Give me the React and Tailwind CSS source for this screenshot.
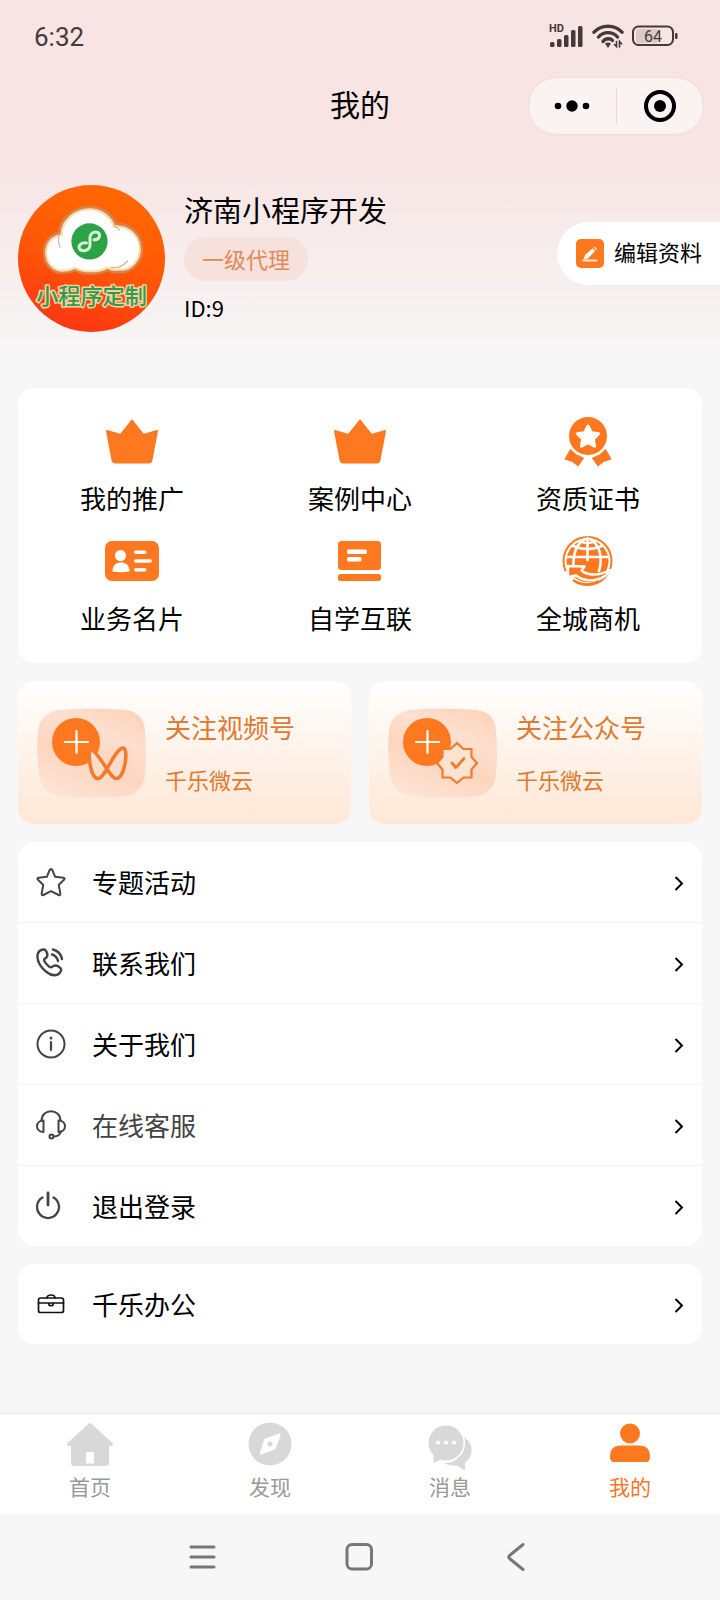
import { useState } from "react";

const ORANGE = "#fd781f";

function SignalIcon() {
  return (
    <svg width="36" height="32" viewBox="0 0 36 32" fill="#46393a" aria-hidden="true">
      <text x="1" y="12" fontSize="11" fontWeight="700" fontFamily="Roboto, sans-serif">
        HD
      </text>
      <rect x="2" y="22" width="4.500" height="5" rx="1.500" />
      <rect x="9" y="19" width="4.500" height="8" rx="1.500" />
      <rect x="16" y="15" width="4.500" height="12" rx="1.500" />
      <rect x="23" y="10" width="4.500" height="17" rx="1.500" />
      <rect x="30" y="6" width="4.500" height="21" rx="1.500" />
    </svg>
  );
}

function WifiIcon() {
  return (
    <svg width="32" height="26" viewBox="0 0 32 26" fill="none" stroke="#46393a" strokeWidth="3.400" strokeLinecap="round" aria-hidden="true">
      <path d="M2 9.200C9.500 1.200 22.500 1.200 30 9.200" />
      <path d="M6.500 14C11.500 8.200 20.500 8.200 25.500 14" />
      <path d="M11 18.500C13.500 15 18.500 15 20.500 17.500" />
      <path d="M13 20.500L16 25L19 20.500Q16 18.500 13 20.500Z" fill="#46393a" stroke="none" />
      <path d="M24.500 18.500V23.500L22.500 21.500M27.500 24V18.500L29.500 20.800" strokeWidth="1.600" />
    </svg>
  );
}

function BatteryIcon() {
  return (
    <svg width="46" height="22" viewBox="0 0 46 22" aria-hidden="true">
      <rect x="4" y="4" width="22" height="14" rx="3" fill="#d9c9c8" />
      <rect x="1" y="1.500" width="40" height="18.500" rx="5.500" fill="none" stroke="#46393a" strokeWidth="2" />
      <rect x="43" y="8" width="2.500" height="6" rx="1" fill="#46393a" />
      <text x="21" y="16.500" textAnchor="middle" fontSize="16" fontFamily="Roboto, sans-serif" fill="#46393a">
        64
      </text>
    </svg>
  );
}

function Avatar() {
  return (
    <svg width="147" height="147" viewBox="0 0 146 146" className="rounded-full" role="img" aria-label="小程序定制">
      <defs>
        <linearGradient id="avatar-bg" x1=".7" y1="0" x2=".4" y2="1">
          <stop offset="0" stopColor="#ff6a00" />
          <stop offset=".55" stopColor="#ff5607" />
          <stop offset="1" stopColor="#fd3614" />
        </linearGradient>
      </defs>
      <rect width="146" height="146" fill="url(#avatar-bg)" />
      <path
        d="M45 87C34 88 26 78 26 67C26 56 33 49 41 48C42 33 56 22 71 22C84 22 94 30 97 39C111 38 123 49 123 64C123 77 112 87 101 86C96 87 92 86 89 84C80 89 65 89 56 84C53 86 49 87 45 87Z"
        fill="#fff"
        stroke="#d9824a"
        strokeWidth="3"
      />
      <path
        d="M45 85C35 86 28 77 28 67C28 57 35 51 43 50C44 35 57 24 71 24C83 24 92 32 95 41C110 40 121 51 121 64C121 76 111 85 101 84C96 85 92 84 89 82C80 87 65 87 56 82C53 84 49 85 45 85Z"
        fill="#fff"
        stroke="#f9dcae"
        strokeWidth="2"
      />
      <path d="M41 50Q39 56 42 62M109 75Q103 83 92 82M95 41Q99 42 101 45" fill="none" stroke="#d9b48a" strokeWidth="1.200" />
      <circle cx="71" cy="56" r="18" fill="#2ba245" />
      <path
        d="M68 57.500C62 57 60 60.500 61 63C62.500 66.500 71 66 71.500 60V52C72 46 80 45 81 49.500C81.500 52.500 79 54.500 75.500 54.500"
        fill="none"
        stroke="#d8f3d9"
        strokeWidth="3"
        strokeLinecap="round"
      />
      <text
        x="73"
        y="118"
        textAnchor="middle"
        fontSize="22"
        fontWeight="500"
        fontFamily="'Noto Sans CJK SC', sans-serif"
        fill="#35994c"
        stroke="#f3d3a4"
        strokeWidth="3"
        strokeLinejoin="round"
        paintOrder="stroke"
      >
        小程序定制
      </text>
    </svg>
  );
}

function EditIcon() {
  return (
    <svg width="28" height="29" viewBox="0 0 28 29" aria-hidden="true">
      <rect width="28" height="29" rx="5" fill={ORANGE} />
      <path d="M7.500 21.500H20.500" stroke="#ffe9dc" strokeWidth="2" strokeLinecap="round" />
      <path d="M7.500 20.500L9 16L16.500 9.500L19 12L12 19.500Z" fill="#fff" />
      <path d="M17.300 8.800L18.800 7.500L21.300 10L19.800 11.400Z" fill="#ffd08a" />
    </svg>
  );
}

function CrownIcon() {
  return (
    <svg width="54" height="54" viewBox="0 0 54 54" aria-hidden="true">
      <path
        d="M27 6.500L38.500 21L52 17L46.500 46Q46 48.500 43.500 48.500H10.500Q8 48.500 7.500 46L2 17L15.500 21Z"
        fill={ORANGE}
        stroke={ORANGE}
        strokeWidth="2"
        strokeLinejoin="round"
      />
    </svg>
  );
}

function MedalIcon() {
  return (
    <svg width="54" height="54" viewBox="0 0 54 54" aria-hidden="true">
      <circle cx="27" cy="22" r="19" fill={ORANGE} />
      <path
        d="M27 12L30.300 18.700L37.700 19.700L32.300 24.900L33.600 32.200L27 28.700L20.400 32.200L21.700 24.900L16.300 19.700L23.700 18.700Z"
        fill="#fff"
        stroke="#fff"
        strokeWidth="3"
        strokeLinejoin="round"
      />
      <path d="M9.500 35.500Q15 42 22.500 44L17 52L11.500 47.500L4 45Z" fill={ORANGE} stroke={ORANGE} strokeLinejoin="round" />
      <path d="M44.500 35.500Q39 42 31.500 44L37 52L42.500 47.500L50 45Z" fill={ORANGE} stroke={ORANGE} strokeLinejoin="round" />
    </svg>
  );
}

function CardIcon() {
  return (
    <svg width="54" height="54" viewBox="0 0 54 54" aria-hidden="true">
      <rect x="0" y="7" width="54" height="40" rx="7" fill={ORANGE} />
      <g fill="#fff">
        <circle cx="15.500" cy="21.500" r="5.500" />
        <path d="M7.500 37.500C7.500 31 11 28.500 16 28.500S24.500 31 24.500 37.500Q16 39 7.500 37.500Z" />
        <rect x="29" y="16.500" width="12.500" height="3.500" rx="1.700" />
        <rect x="29" y="25.300" width="18" height="3.500" rx="1.700" />
        <rect x="29" y="34" width="12.500" height="3.500" rx="1.700" />
      </g>
    </svg>
  );
}

function StudyIcon() {
  return (
    <svg width="54" height="54" viewBox="0 0 54 54" aria-hidden="true">
      <rect x="5" y="7" width="43" height="29" rx="3.500" fill={ORANGE} />
      <rect x="5" y="40" width="43" height="7" rx="2.500" fill={ORANGE} />
      <rect x="14" y="15.500" width="20" height="4.500" rx="1.500" fill="#fff" />
      <rect x="14" y="23" width="14.500" height="4.500" rx="1.500" fill="#fff" />
    </svg>
  );
}

function GlobeIcon() {
  return (
    <svg width="54" height="54" viewBox="0 0 54 54" aria-hidden="true">
      <circle cx="26.500" cy="27" r="24" fill="#fff" stroke={ORANGE} strokeWidth="2" />
      <circle cx="26.500" cy="27" r="21" fill={ORANGE} />
      <g fill="none" stroke="#fff" strokeWidth="2.600" strokeLinecap="round">
        <path d="M26.500 4V26" />
        <path d="M24 5C15 10 12.500 19 12.500 30" />
        <path d="M29 5C39 11 42 24 38 37" />
        <path d="M5 23H48" />
        <path d="M12 12Q26.500 18 41 12" />
        <path d="M19 7.500Q26.500 10.500 34 7.500" strokeWidth="2" />
      </g>
      {/* arrow sweeping round the lower half */}
      <path
        d="M7 43V32L23.500 32.500L20.500 36.500C27 42 38 42 49 36C45 45 28 51 15 41.500Z"
        fill={ORANGE}
        stroke="#fff"
        strokeWidth="2.400"
        strokeLinejoin="round"
      />
      <path d="M2 38L6 37V43.500L12 43L16 48.500L8 48Z" fill="#fff" />
      <path d="M12 46Q24 54 38 47" fill="none" stroke={ORANGE} strokeWidth="2.200" />
    </svg>
  );
}

function PromoTile({ id, children }) {
  return (
    <svg width="109" height="90" viewBox="0 0 109 90" className="shrink-0" aria-hidden="true">
      <defs>
        <linearGradient id={id} x1=".8" y1="0" x2=".3" y2="1">
          <stop offset="0" stopColor="#fdd3b9" />
          <stop offset=".3" stopColor="#fde0cf" />
          <stop offset=".6" stopColor="#fdd5be" />
          <stop offset="1" stopColor="#fde3d3" />
        </linearGradient>
      </defs>
      <path
        d="M22 2Q54 -1 88 2Q107 4 108 23Q110 46 108 66Q106 85 89 88Q54 91 22 88Q4 84 2 66Q-1 45 1 23Q3 5 22 2Z"
        fill={`url(#${id})`}
      />
      <circle cx="39" cy="34" r="24" fill={ORANGE} />
      <path d="M28 34H51M39.500 23V45" stroke="#fff" strokeWidth="2.200" strokeLinecap="round" />
      {children}
    </svg>
  );
}

function VideoTileIcon() {
  return (
    <PromoTile id="tile-video">
      <path
        d="M53 42C51 50 54 70.500 61 70.500C68 70.500 78 40 86 40C92 40 88 70.500 79 70.500C73 70.500 63 46 55 42Q53 40 53 42Z"
        fill="#fddcc8"
        stroke="#f37a2a"
        strokeWidth="3.500"
        strokeLinejoin="round"
      />
    </PromoTile>
  );
}

function OfficialTileIcon() {
  return (
    <PromoTile id="tile-official">
      <path
        d="M69 35L75.500 41H83.500V49L89 55L83.500 61.500V69.500H75.500L69 75L62.500 69.500H54.500V61.500L49 55L54.500 49V41H62.500Z"
        fill="#fee3d3"
        stroke="#f37a2a"
        strokeWidth="2.200"
        strokeLinejoin="round"
      />
      <path d="M64 55L68 59.500L76 50.500" fill="none" stroke="#f37a2a" strokeWidth="2.800" strokeLinecap="round" strokeLinejoin="round" />
    </PromoTile>
  );
}

function LineIcon({ children, color = "#444" }) {
  return (
    <svg
      width="30"
      height="30"
      viewBox="0 0 30 30"
      fill="none"
      stroke={color}
      strokeWidth="2"
      strokeLinecap="round"
      strokeLinejoin="round"
      className="shrink-0"
      aria-hidden="true"
    >
      {children}
    </svg>
  );
}

const shortcuts = [
  { label: "我的推广", icon: <CrownIcon /> },
  { label: "案例中心", icon: <CrownIcon /> },
  { label: "资质证书", icon: <MedalIcon /> },
  { label: "业务名片", icon: <CardIcon /> },
  { label: "自学互联", icon: <StudyIcon /> },
  { label: "全城商机", icon: <GlobeIcon /> },
];

const promos = [
  { title: "关注视频号", icon: <VideoTileIcon /> },
  { title: "关注公众号", icon: <OfficialTileIcon /> },
];

const menu = [
  {
    label: "专题活动",
    icon: (
      <LineIcon>
        <path d="M15 2Q15.800 2 16.300 3L19.200 9.800L27.300 10.800Q29.500 11.200 28 12.800L22.800 17.800L24.300 26.500Q24.500 28.800 22.600 28L15 24.200L7.400 28Q5.500 28.800 5.700 26.500L7.200 17.800L2 12.800Q.5 11.200 2.700 10.800L10.800 9.800L13.700 3Q14.200 2 15 2Z" />
      </LineIcon>
    ),
  },
  {
    label: "联系我们",
    icon: (
      <LineIcon>
        <path
          d="M7 1.500C9 1 10 2 11 5C12 8 11 9.500 9 10.500C7.500 11.500 8 13 10 15.500C12.500 18.500 14.500 20 16 19C18 17 20 17 22.500 18.500C25.500 20.500 26 22 24 24.500C21.500 28 16 28.500 10.500 24C4 18.500 1 12 1.500 7C2 4 4 2 7 1.500Z"
          strokeWidth="2.400"
        />
        <path d="M17 1.500Q24.500 3.500 26 11M16 6.500Q20.500 7.500 22 13" strokeWidth="2.400" />
      </LineIcon>
    ),
  },
  {
    label: "关于我们",
    icon: (
      <LineIcon>
        <circle cx="15" cy="15" r="13.500" />
        <path d="M15 13V21" strokeWidth="2.200" />
        <circle cx="15" cy="9" r=".6" strokeWidth="1.800" />
      </LineIcon>
    ),
  },
  {
    label: "在线客服",
    muted: true,
    icon: (
      <LineIcon>
        <path d="M5.500 10.500C6 -2 24 -2 24.500 10.500" />
        <path d="M7.500 10.500V22C3.500 22 1 19.500 1 16.300S3.500 10.500 7.500 10.500Z" />
        <path d="M22.500 10.500V22C26.500 22 29 19.500 29 16.300S26.500 10.500 22.500 10.500Z" />
        <path d="M25 21.500Q23.500 26.500 18 26.500" />
        <circle cx="15.500" cy="26.500" r="2" />
      </LineIcon>
    ),
  },
  {
    label: "退出登录",
    icon: (
      <LineIcon>
        <path d="M6.500 6.500A11 11 0 1 0 17.500 6.500" strokeWidth="2.300" />
        <path d="M12 2V14" strokeWidth="2.800" />
      </LineIcon>
    ),
  },
];

const tabs = [
  {
    label: "首页",
    icon: (
      <svg width="48" height="48" viewBox="0 0 48 48" fill="currentColor" aria-hidden="true">
        <path
          fillRule="evenodd"
          d="M24 2.500L46.500 23Q48 26 45 26H43V43Q43 46 40 46H8Q5 46 5 43V26H3Q0 26 1.500 23ZM20 32V43.500H28V32Z"
        />
      </svg>
    ),
  },
  {
    label: "发现",
    icon: (
      <svg width="48" height="48" viewBox="0 0 48 48" fill="currentColor" aria-hidden="true">
        <circle cx="24" cy="24" r="21.500" />
        <path d="M34 14L29 28.500L14.500 34L19 19.500Z" fill="#fff" stroke="#fff" strokeWidth="1.500" strokeLinejoin="round" />
        <circle cx="24" cy="24" r="2.600" />
      </svg>
    ),
  },
  {
    label: "消息",
    icon: (
      <svg width="48" height="50" viewBox="0 0 48 50" className="-mb-0.5" fill="currentColor" aria-hidden="true">
        <path d="M38 17C48 23 48 36 39 42.500V51L31.500 45.500C25 46.500 18 44 13 40Z" />
        <path d="M20 5.500A17.500 17.500 0 1 1 16 40.200L7.500 44V34.500A17.500 17.500 0 0 1 20 5.500Z" stroke="#fff" strokeWidth="5" />
        <circle cx="20" cy="23" r="17.500" />
        <path d="M7.500 32V43L20 37Z" />
        <g fill="#fff">
          <circle cx="12" cy="22.500" r="2" />
          <circle cx="20" cy="22.500" r="2" />
          <circle cx="28" cy="22.500" r="2" />
        </g>
      </svg>
    ),
  },
  {
    label: "我的",
    icon: (
      <svg width="48" height="48" viewBox="0 0 48 48" fill="currentColor" aria-hidden="true">
        <circle cx="24" cy="13.500" r="10" />
        <path d="M4 37C4 29 8 25.500 15 25.500H33C40 25.500 44 29 44 37Q44 42 40 42H8Q4 42 4 37Z" />
      </svg>
    ),
  },
];

function MenuRow({ icon, label, muted }) {
  return (
    <a href="#" className="box-content flex h-20 items-center">
      <span className="ml-[18px]">{icon}</span>
      <span className={`ml-[26px] flex-1 text-[26px] leading-8 ${muted ? "text-[#444]" : "text-black"}`}>{label}</span>
      <svg width="10" height="18" viewBox="0 0 10 18" className="mr-[18px]" fill="none" stroke="#000" strokeWidth="2" aria-hidden="true">
        <path d="M1.500 4L8 10.500L1.500 17" />
      </svg>
    </a>
  );
}

export default function App() {
  const [active, setActive] = useState("我的");

  return (
    <div className="flex min-h-screen flex-col bg-[#f7f7f7] font-['Noto_Sans_CJK_SC',sans-serif] text-black">
      <header className="bg-linear-to-b from-[#f7e4e3] from-40% to-[#f7f7f7] to-95% pb-14">
        <div className="flex h-[74px] items-center justify-between pl-[34px] pr-[42px]">
          <span className="font-['Roboto',sans-serif] text-[26px] leading-8 text-[#46393a]">6:32</span>
          <div className="flex items-center gap-2 pb-0.5">
            <SignalIcon />
            <WifiIcon />
            <BatteryIcon />
          </div>
        </div>

        <div className="grid h-16 grid-cols-[1fr_auto_1fr] items-center px-4">
          <h1 className="col-start-2 pb-1.5 text-[30px] leading-9">我的</h1>
          <div className="flex h-[58px] w-44 items-center justify-self-end rounded-full border border-[#efdedd] bg-[#fbf3f2]">
            <button type="button" aria-label="更多" className="flex h-full flex-1 items-center justify-center">
              <svg width="36" height="14" viewBox="0 0 36 14" aria-hidden="true">
                <circle cx="4" cy="7" r="3.300" />
                <circle cx="18" cy="7" r="5.700" />
                <circle cx="32" cy="7" r="3.300" />
              </svg>
            </button>
            <span className="h-9 w-px bg-[#e6d9d8]" />
            <button type="button" aria-label="关闭" className="flex h-full flex-1 items-center justify-center">
              <svg width="34" height="34" viewBox="0 0 34 34" aria-hidden="true">
                <circle cx="17" cy="17" r="14" fill="none" stroke="#000" strokeWidth="4" />
                <circle cx="17" cy="17" r="6" />
              </svg>
            </button>
          </div>
        </div>

        <div className="mt-[47px] flex items-center pl-[18px]">
          <Avatar />
          <div className="ml-[19px] flex flex-1 flex-col items-start gap-3 pb-1">
            <h2 className="text-[29px] leading-8">济南小程序开发</h2>
            <span className="flex h-11 items-center rounded-full bg-[#f6e1dd] px-[18px] text-[22px] text-[#e08a57]">
              一级代理
            </span>
            <p className="text-[22px] leading-7">ID:9</p>
          </div>
          <button
            type="button"
            className="mt-[37px] flex h-[63px] items-center gap-[10px] self-start rounded-l-full bg-white pl-[19px] pr-[18px] text-[22px]"
          >
            <EditIcon />
            <span className="pb-1">编辑资料</span>
          </button>
        </div>
      </header>

      <main className="flex flex-1 flex-col gap-[18px] px-[18px] pb-16">
        <section className="grid grid-cols-3 gap-y-5 rounded-2xl bg-white pb-[29px] pt-[26px]">
          {shortcuts.map((s) => (
            <a key={s.label} href="#" className="flex flex-col items-center gap-[14px]">
              {s.icon}
              <span className="text-[26px] leading-8">{s.label}</span>
            </a>
          ))}
        </section>

        <section className="grid grid-cols-2 gap-[18px]">
          {promos.map((p) => (
            <a
              key={p.title}
              href="#"
              className="flex h-[143px] items-center rounded-2xl bg-linear-to-b from-white to-[#fee7d5] pl-[19px] text-[#e07a30]"
            >
              {p.icon}
              <div className="ml-[19px] flex flex-col gap-5">
                <span className="text-[26px] leading-8">{p.title}</span>
                <span className="text-[22px] leading-8">千乐微云</span>
              </div>
            </a>
          ))}
        </section>

        <nav className="divide-y divide-[#f3f3f3] rounded-2xl bg-white">
          {menu.map((m) => (
            <MenuRow key={m.label} {...m} />
          ))}
        </nav>

        <nav className="rounded-2xl bg-white">
          <MenuRow
            label="千乐办公"
            icon={
              <LineIcon color="#111">
                <rect x="2.500" y="9" width="25" height="14.500" rx="2" strokeWidth="1.700" />
                <path d="M11 9C11 5 19 5 19 9M2.500 14H27.500" strokeWidth="1.700" />
                <path d="M13 14.500V16Q15 17.500 17 16V14.500" strokeWidth="1.700" />
              </LineIcon>
            }
          />
        </nav>
      </main>

      <nav className="grid grid-cols-4 border-t border-[#e8e8e8] bg-white pb-3 pt-1.5">
        {tabs.map((t) => (
          <button
            key={t.label}
            type="button"
            onClick={() => setActive(t.label)}
            className={`flex flex-col items-center gap-0.5 ${active === t.label ? "text-[#fd781f]" : "text-[#d8d8d8]"}`}
          >
            {t.icon}
            <span className={`text-[21px] leading-8 ${active === t.label ? "text-[#f07a2a]" : "text-[#999]"}`}>
              {t.label}
            </span>
          </button>
        ))}
      </nav>

      <footer className="flex h-[86px] items-center justify-center gap-[125px]">
        <button type="button" aria-label="菜单">
          <svg width="32" height="32" viewBox="0 0 32 32" stroke="#777" strokeWidth="3" strokeLinecap="round" aria-hidden="true">
            <path d="M4 6H27M4 16H27M4 26H27" />
          </svg>
        </button>
        <button type="button" aria-label="主屏幕">
          <svg width="32" height="32" viewBox="0 0 32 32" fill="none" stroke="#777" strokeWidth="3" aria-hidden="true">
            <rect x="3" y="3.500" width="24.500" height="24.500" rx="5" />
          </svg>
        </button>
        <button type="button" aria-label="返回">
          <svg width="32" height="32" viewBox="0 0 32 32" fill="none" stroke="#777" strokeWidth="3" strokeLinecap="round" strokeLinejoin="round" aria-hidden="true">
            <path d="M22 3.500L8.500 14.500Q7 16 8.500 17.500L22 28.500" />
          </svg>
        </button>
      </footer>
    </div>
  );
}
